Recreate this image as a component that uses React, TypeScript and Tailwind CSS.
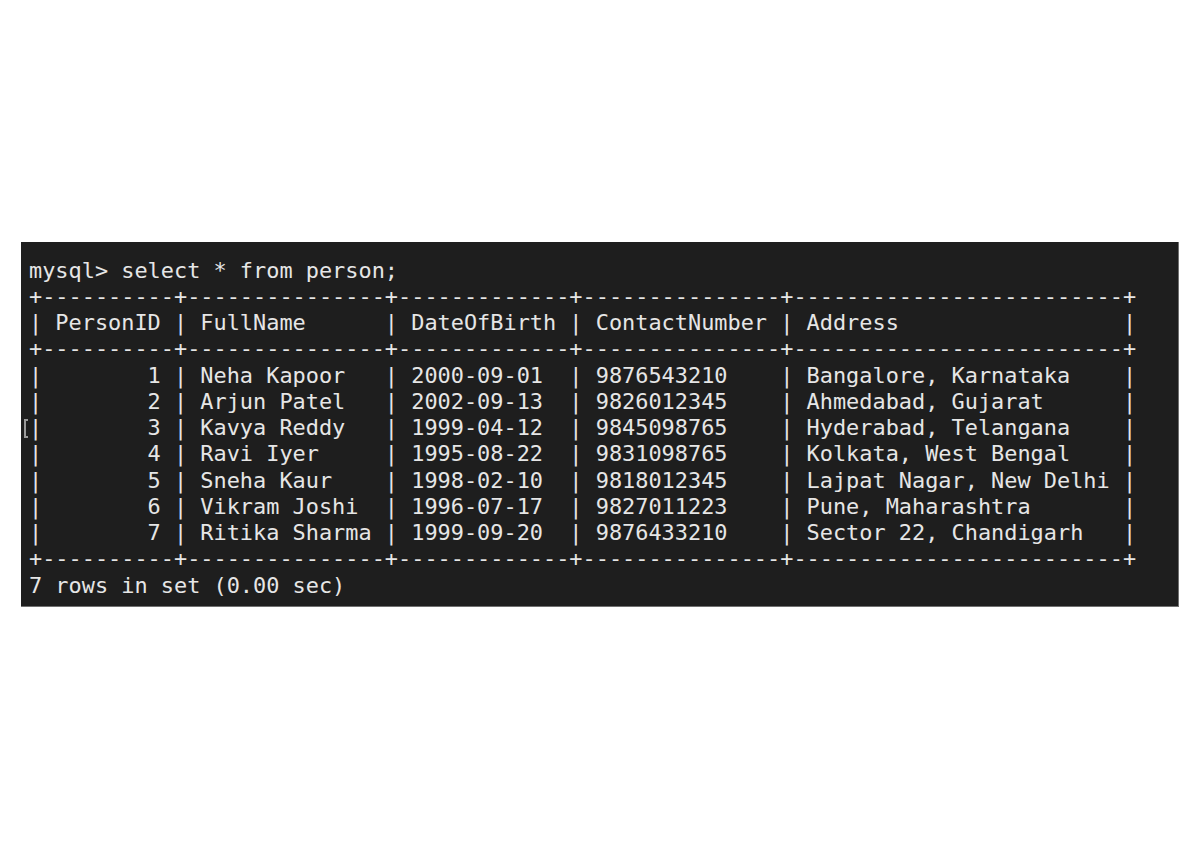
const border =
  "+----------+---------------+-------------+---------------+-------------------------+";

const rows: [number, string, string, string, string][] = [
  [1, "Neha Kapoor", "2000-09-01", "9876543210", "Bangalore, Karnataka"],
  [2, "Arjun Patel", "2002-09-13", "9826012345", "Ahmedabad, Gujarat"],
  [3, "Kavya Reddy", "1999-04-12", "9845098765", "Hyderabad, Telangana"],
  [4, "Ravi Iyer", "1995-08-22", "9831098765", "Kolkata, West Bengal"],
  [5, "Sneha Kaur", "1998-02-10", "9818012345", "Lajpat Nagar, New Delhi"],
  [6, "Vikram Joshi", "1996-07-17", "9827011223", "Pune, Maharashtra"],
  [7, "Ritika Sharma", "1999-09-20", "9876433210", "Sector 22, Chandigarh"],
];

function row(cells: string[], widths: number[], right: boolean[]) {
  const parts = cells.map((c, i) =>
    right[i] ? c.padStart(widths[i]) : c.padEnd(widths[i])
  );
  return "| " + parts.join(" | ") + " |";
}

const widths = [8, 13, 11, 13, 23];

export default function App() {
  const lines = [
    "mysql> select * from person;",
    border,
    row(["PersonID", "FullName", "DateOfBirth", "ContactNumber", "Address"], widths, [false, false, false, false, false]),
    border,
    ...rows.map((r) =>
      row([String(r[0]), r[1], r[2], r[3], r[4]], widths, [true, false, false, false, false])
    ),
    border,
    "7 rows in set (0.00 sec)",
  ];

  return (
    <div className="flex h-[848px] w-full items-center justify-center bg-white">
      <div className="relative h-[365px] w-[1158px] border-r border-b border-[#707070] bg-[#1e1e1e] pl-[8px] pt-[16px]">
        <pre className="m-0 whitespace-pre font-['DejaVu_Sans_Mono',monospace] text-[21.9px] leading-[26.25px] text-[#e6e6e6]">
          {lines.join("\n")}
        </pre>
        {/* stray cursor bracket left of the table */}
        <div className="absolute left-[3px] top-[177px] h-[19px] w-[4px] border-2 border-r-0 border-[#9a9a9a]" />
      </div>
    </div>
  );
}
